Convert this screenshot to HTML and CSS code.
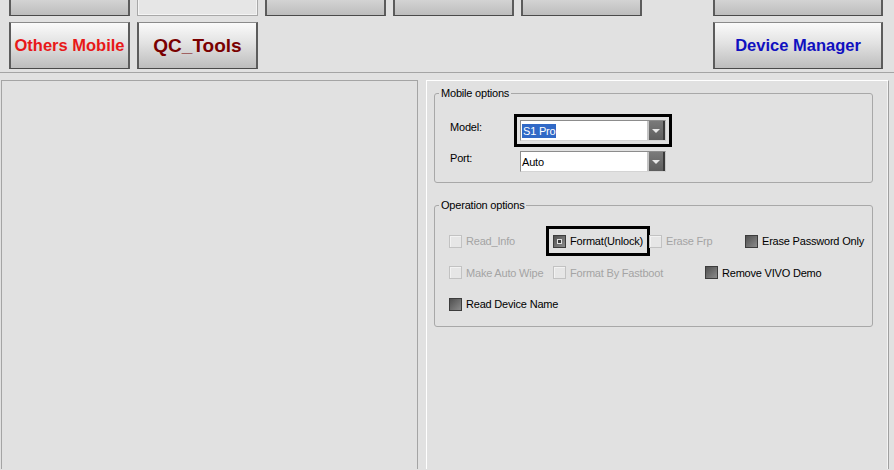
FILE: index.html
```html
<!DOCTYPE html>
<html lang="en">
<head>
    <meta charset="UTF-8">
    <meta name="viewport" content="width=device-width, initial-scale=1.0">
    <title>Mobile Tool</title>
    <link rel="stylesheet" href="styles.css">
</head>
<body>
    <div class="toolbar">
        <div class="btn-row first">
            <button class="tool"></button>
            <button class="tool off"></button>
            <button class="tool"></button>
            <button class="tool"></button>
            <button class="tool"></button>
            <button class="tool wide"></button>
        </div>
        <div class="btn-row">
            <button class="tool others">Others Mobile</button>
            <button class="tool qc">QC_Tools</button>
            <button class="tool wide device">Device Manager</button>
        </div>
    </div>

    <div class="main">
        <div class="log-panel"></div>

        <div class="side-panel">
            <fieldset class="group mobile">
                <legend>Mobile options</legend>
                <div class="field-row">
                    <label>Model:</label>
                    <div class="combo marked">
                        <span class="combo-text"><span class="selected">S1 Pro</span></span>
                        <span class="combo-btn"></span>
                    </div>
                </div>
                <div class="field-row">
                    <label>Port:</label>
                    <div class="combo">
                        <span class="combo-text">Auto</span>
                        <span class="combo-btn"></span>
                    </div>
                </div>
            </fieldset>

            <fieldset class="group operation">
                <legend>Operation options</legend>
                <div class="check-grid">
                    <div class="check disabled r1 c1"><span class="box"></span>Read_Info</div>
                    <div class="check r1 c2 marked"><span class="box checked"></span>Format(Unlock)</div>
                    <div class="check disabled r1 c3"><span class="box"></span>Erase Frp</div>
                    <div class="check r1 c5"><span class="box"></span>Erase Password Only</div>

                    <div class="check disabled r2 c1"><span class="box"></span>Make Auto Wipe</div>
                    <div class="check disabled r2 c2 span"><span class="box"></span>Format By Fastboot</div>
                    <div class="check r2 c4"><span class="box"></span>Remove VIVO Demo</div>

                    <div class="check r3 c1"><span class="box"></span>Read Device Name</div>
                </div>
            </fieldset>
        </div>
    </div>
</body>
</html>
```

FILE: styles.css
```css
body {
    margin: 0;
    width: 894px;
    height: 470px;
    overflow: hidden;
    background-color: #e1e1e1;
    font-family: "Liberation Sans", Arial, sans-serif;
    font-size: 11px;
    letter-spacing: -0.2px;
    color: #000;
}

/* top button bar */
.toolbar {
    display: flex;
    flex-direction: column;
    gap: 6px;
    padding-bottom: 3px;
    border-bottom: 1px solid #a4a4a4;
}

.btn-row {
    display: grid;
    grid-template-columns: repeat(5, 121px) 1fr 170px;
    column-gap: 7px;
    height: 47px;
    padding: 0 11px 0 9px;
}

.btn-row.first {
    margin-top: -31px;
}

.tool {
    height: 47px;
    margin: 0;
    padding: 0;
    border-style: solid;
    border-width: 1px 2px;
    border-color: #8a8a8a #5c5c5c #4a4a4a #5c5c5c;
    background: linear-gradient(#fafafa, #e2e2e2 45%, #bdbdbd);
    font-family: "Liberation Sans", Arial, sans-serif;
    font-weight: bold;
    font-size: 16.5px;
    letter-spacing: 0;
    white-space: nowrap;
}

.tool.off {
    border: 1px solid #a8a8a8;
    box-shadow: inset 0 0 0 1px #f4f4f4;
    background: #e6e6e6;
}

.tool.wide {
    grid-column: 7;
}

.tool.others {
    color: #e81818;
}

.tool.qc {
    color: #7a0000;
    font-size: 19px;
}

.tool.device {
    color: #1010c0;
}

/* panels */
.main {
    display: flex;
    padding: 7px 0 0 1px;
}

.log-panel {
    box-sizing: border-box;
    width: 417px;
    height: 389px;
    border: 1px solid #a4a4a4;
    border-bottom: none;
}

.side-panel {
    box-sizing: border-box;
    width: 463px;
    height: 389px;
    margin-left: 8px;
    padding: 6px 15px 0 7px;
    border-top: 1px solid #fff;
    border-left: 1px solid #fff;
    border-right: 1px solid #a0a0a0;
    box-shadow: inset -1px 0 0 #f4f4f4;
}

.group {
    margin: 0;
    padding: 0 4px 10px 4px;
    border: 1px solid #a8a8a8;
    border-radius: 3px;
}

.group legend {
    padding: 0 2px;
    line-height: 13px;
}

.group.operation {
    margin-top: 16px;
    padding-bottom: 14px;
}

/* combo boxes */
.field-row {
    display: flex;
    align-items: flex-start;
    margin-left: 11px;
    margin-top: 10px;
}

.mobile .field-row:first-of-type {
    margin-top: 20px;
}

.field-row label {
    width: 70px;
    line-height: 15px;
}

.combo {
    box-sizing: border-box;
    display: flex;
    width: 146px;
    height: 21px;
    border: 1px solid #8c8c8c;
    border-right-color: #c8c8c8;
    border-bottom-color: #d4d4d4;
    background: #fff;
}

.combo.marked {
    outline: 3px solid #000;
    outline-offset: 3px;
}

.combo-text {
    flex: 1;
    display: flex;
    align-items: center;
    padding-left: 1px;
}

.selected {
    background: #3169c6;
    color: #fff;
    padding: 1px 1px;
}

.combo-btn {
    width: 14px;
    border-left: 2px solid #c4c4c4;
    border-right: 2px solid #3a3a3a;
    background: linear-gradient(#7a7a7a, #5e5e5e);
    position: relative;
}

.combo-btn::after {
    content: "";
    position: absolute;
    left: 3px;
    top: 8px;
    border-left: 4px solid transparent;
    border-right: 4px solid transparent;
    border-top: 4px solid #e8e8e8;
}

/* check boxes */
.check-grid {
    display: grid;
    grid-template-columns: 104px 96px 56px 40px auto;
    grid-template-rows: repeat(3, 16px);
    row-gap: 15.5px;
    margin: 21px 0 0 10px;
}

.check {
    display: flex;
    align-items: center;
    gap: 3px;
    height: 16px;
    white-space: nowrap;
}

.check.r1 { grid-row: 1; }
.check.r2 { grid-row: 2; }
.check.r3 { grid-row: 3; }
.check.c1 { grid-column: 1; }
.check.c2 { grid-column: 2; }
.check.c2.span { grid-column: 2 / span 2; }
.check.c3 { grid-column: 3 / span 2; }
.check.c4 { grid-column: 4 / span 2; }
.check.c5 { grid-column: 5; }

.check.marked {
    justify-self: start;
    outline: 3px solid #000;
    outline-offset: 4px;
}

.box {
    box-sizing: border-box;
    flex-shrink: 0;
    width: 13px;
    height: 13px;
    margin-right: 1px;
    border: 1px solid #3c3c3c;
    background: linear-gradient(135deg, #505050, #8c8c8c);
    position: relative;
}

.box.checked::after {
    content: "";
    position: absolute;
    left: 3px;
    top: 3px;
    width: 5px;
    height: 5px;
    box-sizing: border-box;
    border: 1px solid #e0e0e0;
    background: #3a3a3a;
}

.check.disabled {
    color: #a4a4a4;
}

.check.disabled .box {
    border-color: #c2c2c2;
    background: #e6e6e6;
    box-shadow: inset 1px 1px 0 #f2f2f2;
}
```
